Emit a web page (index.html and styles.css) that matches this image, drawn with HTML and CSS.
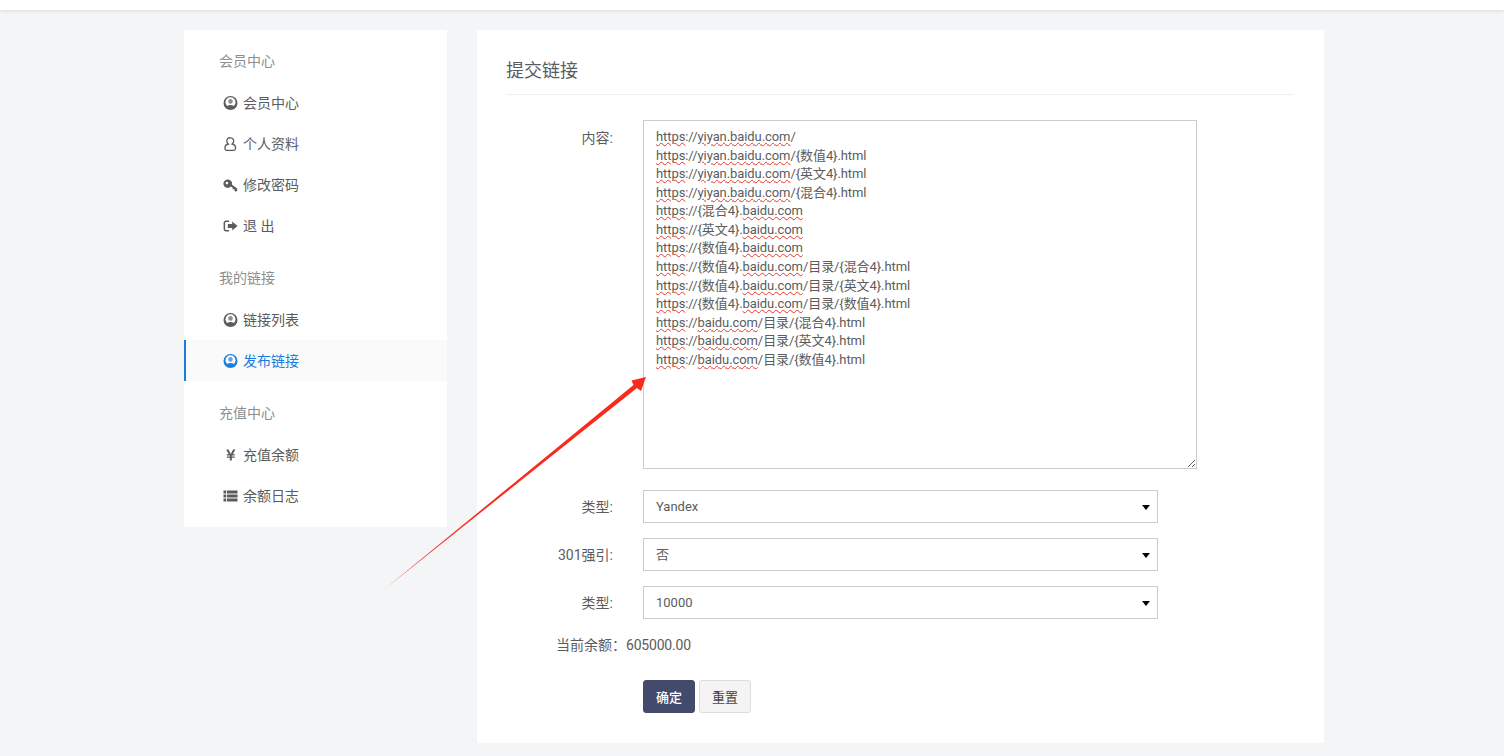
FILE: index.html
```html
<!DOCTYPE html>
<html lang="zh-CN">
<head>
    <meta charset="UTF-8">
    <meta name="viewport" content="width=device-width, initial-scale=1.0">
    <title>提交链接</title>
    <link rel="stylesheet" href="styles.css">
</head>
<body>
    <svg width="0" height="0" class="defs">
        <symbol id="i-user-circle" viewBox="0 0 15 14">
            <circle cx="7.500" cy="7" r="7" fill="currentColor"/>
            <circle cx="7.500" cy="6.200" r="5" fill="#fff"/>
            <path d="M2.800 11.800c.6-2 2.400-2.900 4.700-2.900s4.100.9 4.700 2.900l-1.400 1.300H4.200z" fill="currentColor"/>
            <circle cx="7.500" cy="5.400" r="2.300" fill="currentColor" opacity=".7"/>
        </symbol>
    </svg>
    <header class="topbar"></header>
    <div class="container">
        <div class="sidebar">
            <h4 class="menu-title">会员中心</h4>
            <a class="menu-item"><svg class="icon"><use href="#i-user-circle"/></svg>会员中心</a>
            <a class="menu-item">
                <svg class="icon" viewBox="0 0 15 14"><path fill="none" stroke="currentColor" stroke-width="1.300" d="M7.500.8a3.200 3.200 0 0 1 3.200 3.300c0 1.300-.6 2.300-1.500 2.900 2 .5 3.300 1.700 3.300 3.600v1.200c0 .9-.6 1.500-1.500 1.500H3.500c-.9 0-1.500-.6-1.500-1.500v-1.200c0-1.900 1.300-3.100 3.300-3.600C4.400 6.400 3.800 5.400 3.800 4.100A3.200 3.200 0 0 1 7.500.8z"/></svg>个人资料
            </a>
            <a class="menu-item">
                <svg class="icon" viewBox="0 0 15 14"><path fill-rule="evenodd" d="M5 1.500a4.200 4.200 0 0 1 4 5.300l5.200 3.700v2.200l-1.500 1-1.200-1v-1.500H9.700V9.800L7.800 8.400A4.200 4.200 0 1 1 5 1.500zM3.900 3.800a1.300 1.300 0 1 0 0 2.600 1.300 1.300 0 0 0 0-2.600z"/></svg>修改密码
            </a>
            <a class="menu-item">
                <svg class="icon" viewBox="0 0 15 14"><path d="M6 1.500v1.500H3.200c-.7 0-1.100.4-1.100 1.100v5.800c0 .7.400 1.100 1.100 1.100H6v1.500H3C1.500 12.500.6 11.600.6 10.100V3.900C.6 2.400 1.500 1.500 3 1.500z"/><path d="M9.200 2.500 14.500 7l-5.300 4.500V9H4.800V5h4.400z"/></svg>退 出
            </a>

            <h4 class="menu-title second">我的链接</h4>
            <a class="menu-item"><svg class="icon"><use href="#i-user-circle"/></svg>链接列表</a>
            <a class="menu-item active"><svg class="icon"><use href="#i-user-circle"/></svg>发布链接</a>

            <h4 class="menu-title second">充值中心</h4>
            <a class="menu-item">
                <svg class="icon" viewBox="0 0 15 14"><path d="M3.200 1.500h2.300L7.800 6l2.300-4.500h2.300L9.900 6.300h1.900v1.200H8.800v1h3v1.200h-3v2.800H6.800V9.700h-3V8.500h3v-1h-3V6.300h1.900z"/></svg>充值余额
            </a>
            <a class="menu-item">
                <svg class="icon" viewBox="0 0 15 14"><path d="M.5 1.500h2.500v3H.5zM3.800 1.500h10.700v3H3.800zM.5 5.500h2.500v3H.5zM3.800 5.500h10.700v3H3.800zM.5 9.500h2.500v3H.5zM3.800 9.500h10.700v3H3.800z"/></svg>余额日志
            </a>
        </div>

        <div class="main-content">
            <h3 class="page-title">提交链接</h3>
            <form class="link-form">
                <div class="form-row content-row">
                    <label class="form-label">内容:</label>
                    <div class="fake-textarea" role="textbox"><span class="typo">https</span>://<span class="typo">yiyan.baidu.com</span>/
<span class="typo">https</span>://<span class="typo">yiyan.baidu.com</span>/{数值4}.html
<span class="typo">https</span>://<span class="typo">yiyan.baidu.com</span>/{英文4}.html
<span class="typo">https</span>://<span class="typo">yiyan.baidu.com</span>/{混合4}.html
<span class="typo">https</span>://{混合4}.<span class="typo">baidu.com</span>
<span class="typo">https</span>://{英文4}.<span class="typo">baidu.com</span>
<span class="typo">https</span>://{数值4}.<span class="typo">baidu.com</span>
<span class="typo">https</span>://{数值4}.<span class="typo">baidu.com</span>/目录/{混合4}.html
<span class="typo">https</span>://{数值4}.<span class="typo">baidu.com</span>/目录/{英文4}.html
<span class="typo">https</span>://{数值4}.<span class="typo">baidu.com</span>/目录/{数值4}.html
<span class="typo">https</span>://<span class="typo">baidu.com</span>/目录/{混合4}.html
<span class="typo">https</span>://<span class="typo">baidu.com</span>/目录/{英文4}.html
<span class="typo">https</span>://<span class="typo">baidu.com</span>/目录/{数值4}.html</div>
                </div>
                <div class="form-row">
                    <label class="form-label">类型:</label>
                    <div class="select-wrap"><select><option>Yandex</option></select></div>
                </div>
                <div class="form-row">
                    <label class="form-label">301强引:</label>
                    <div class="select-wrap"><select><option>否</option></select></div>
                </div>
                <div class="form-row last-row">
                    <label class="form-label">类型:</label>
                    <div class="select-wrap"><select><option>10000</option></select></div>
                </div>
                <div class="balance">当前余额：<span class="amount">605000.00</span></div>
                <div class="actions">
                    <button type="button" class="btn btn-primary">确定</button>
                    <button type="button" class="btn">重置</button>
                </div>
            </form>
        </div>
    </div>

    <!-- annotation drawn over the page -->
    <svg class="arrow" viewBox="0 0 1504 756">
        <polygon points="386,588 633.5,385 631.5,380.500 646,377 641,391 637,388"/>
    </svg>
</body>
</html>
```

FILE: styles.css
```css
* {
    box-sizing: border-box;
    margin: 0;
    padding: 0;
}

html, body {
    height: 756px;
    overflow: hidden;
}

body {
    font-family: Roboto, "Noto Sans CJK SC", sans-serif;
    font-size: 14px;
    line-height: 20px;
    background: #f4f5f7;
    color: #5c5c5c;
    position: relative;
}

.defs {
    position: absolute;
}

.topbar {
    height: 10px;
    background: #fff;
    box-shadow: 0 1px 4px rgba(0,0,0,0.1);
}

.container {
    width: 1140px;
    margin: 20px 0 0 184px;
    display: grid;
    grid-template-columns: 263px 847px;
    gap: 30px;
    align-items: start;
}

.sidebar {
    background: #fff;
    padding: 21px 0 11px;
}

.menu-title {
    font-size: 14px;
    font-weight: normal;
    color: #8f8f8f;
    padding-left: 35px;
    height: 20px;
    margin-bottom: 11px;
}

.menu-title.second {
    margin-top: 22px;
}

.menu-item {
    display: flex;
    align-items: center;
    gap: 5px;
    height: 41px;
    padding-left: 39px;
    color: #5c5c5c;
}

.menu-item.active {
    padding-left: 37px;
    border-left: 2px solid #1a7ee0;
    background: #fafafa;
    color: #1a7ee0;
}

.icon {
    width: 15px;
    height: 14px;
    fill: currentColor;
    flex: none;
}

.main-content {
    background: #fff;
    height: 713px;
    padding: 30px 30px 0 29px;
}

.page-title {
    font-size: 18px;
    font-weight: normal;
    line-height: 22px;
    height: 35px;
    padding-bottom: 12px;
    border-bottom: 1px solid #f1f1f1;
    color: #5c5c5c;
}

.link-form {
    padding: 25px 0 0 1px;
}

.form-row {
    display: grid;
    grid-template-columns: 106px 1fr;
    column-gap: 30px;
    margin-bottom: 15px;
}

.content-row {
    margin-bottom: 21px;
}

.last-row {
    margin-bottom: 0;
}

.form-label {
    text-align: right;
    font-size: 14px;
    padding-top: 7px;
}

.content-row .form-label {
    padding-top: 8px;
}

.fake-textarea {
    width: 554px;
    height: 349px;
    border: 1px solid #ccc;
    padding: 7px 12px;
    font-size: 13px;
    line-height: 18.57px;
    letter-spacing: -0.08px;
    white-space: pre;
    overflow: auto;
    resize: both;
}

.typo {
    text-decoration: underline wavy #e8372c;
    text-decoration-thickness: 1px;
}

.select-wrap {
    position: relative;
    width: 515px;
}

.select-wrap::after {
    content: "";
    position: absolute;
    right: 8px;
    top: 15px;
    border-top: 5px solid #000;
    border-left: 4px solid transparent;
    border-right: 4px solid transparent;
}

select {
    display: block;
    width: 100%;
    height: 33px;
    border: 1px solid #ccc;
    border-radius: 0;
    padding: 0 12px;
    background: #fff;
    color: #5c5c5c;
    font: 13px Roboto, "Noto Sans CJK SC", sans-serif;
    appearance: none;
}

.balance {
    padding: 16px 0 0 49px;
    font-size: 14px;
}

.amount {
    letter-spacing: -0.2px;
}

.actions {
    display: flex;
    gap: 4px;
    margin-top: 25px;
    padding-left: 136px;
}

.btn {
    width: 52px;
    height: 33px;
    border: 1px solid #ddd;
    border-radius: 3px;
    background: #f4f4f4;
    color: #444;
    font: 13px Roboto, "Noto Sans CJK SC", sans-serif;
}

.btn-primary {
    background: #434a6b;
    border-color: #434a6b;
    color: #fff;
    font-weight: 500;
}

.arrow {
    position: absolute;
    left: 0;
    top: 0;
    width: 1504px;
    height: 756px;
    pointer-events: none;
}

.arrow polygon {
    fill: #f92b1d;
}
```
